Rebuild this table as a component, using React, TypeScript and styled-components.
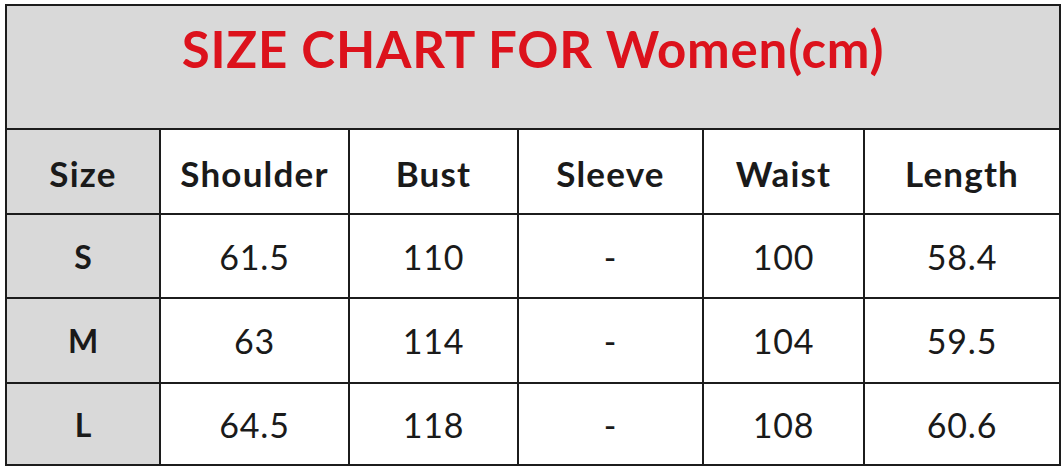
import React from "react";
import styled, { createGlobalStyle } from "styled-components";

const GlobalStyle = createGlobalStyle`
  html, body {
    margin: 0;
    padding: 0;
    background: #ffffff;
  }
  body {
    font-family: Lato, "Open Sans", "Liberation Sans", sans-serif;
  }
`;

const Page = styled.div`
  width: 1064px;
  height: 470px;
  padding: 4px 0 0 5px;
  box-sizing: border-box;
  background: #ffffff;
`;

const Chart = styled.div`
  display: grid;
  grid-template-columns: 154px 189px 169px 185px 161px 196px;
  grid-template-rows: 124px 85px 84px 85px 82px;
  width: max-content;
  border-top: 2px solid #1c1c1c;
  border-left: 2px solid #1c1c1c;
`;

const Cell = styled.div<{ $grey?: boolean }>`
  display: flex;
  align-items: center;
  justify-content: center;
  box-sizing: border-box;
  border-right: 2px solid #1c1c1c;
  border-bottom: 2px solid #1c1c1c;
  background: ${({ $grey }) => ($grey ? "#d9d9d9" : "#ffffff")};
  color: #1a1a1a;
`;

const Title = styled(Cell)`
  grid-column: 1 / -1;
  background: #d9d9d9;
  color: #dc121c;
  font-size: 51px;
  font-weight: 700;
  padding-bottom: 38px;
  letter-spacing: 0.8px;
`;

const HeadCell = styled(Cell)`
  font-size: 35px;
  font-weight: 700;
  letter-spacing: 1.2px;
  padding-top: 2px;
`;

const SizeCell = styled(Cell)`
  font-size: 32px;
  font-weight: 700;
`;

const ValueCell = styled(Cell)`
  font-size: 34px;
  font-weight: 400;
  letter-spacing: 0.8px;
`;

const headers = ["Size", "Shoulder", "Bust", "Sleeve", "Waist", "Length"];

const rows = [
  { size: "S", values: ["61.5", "110", "-", "100", "58.4"] },
  { size: "M", values: ["63", "114", "-", "104", "59.5"] },
  { size: "L", values: ["64.5", "118", "-", "108", "60.6"] },
];

export default function App() {
  return (
    <>
      <GlobalStyle />
      <Page>
        <Chart>
          <Title>SIZE CHART FOR Women(cm)</Title>
          {headers.map((h, i) => (
            <HeadCell key={h} $grey={i === 0}>
              {h}
            </HeadCell>
          ))}
          {rows.map((r) => (
            <React.Fragment key={r.size}>
              <SizeCell $grey>{r.size}</SizeCell>
              {r.values.map((v, i) => (
                <ValueCell key={i}>{v}</ValueCell>
              ))}
            </React.Fragment>
          ))}
        </Chart>
      </Page>
    </>
  );
}
